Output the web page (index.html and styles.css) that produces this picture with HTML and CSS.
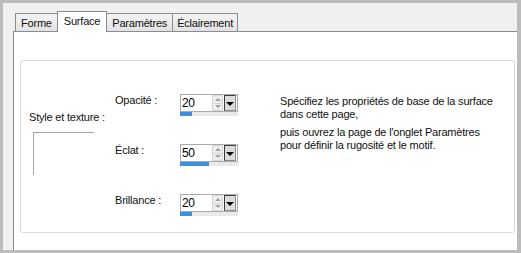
FILE: index.html
```html
<!DOCTYPE html>
<html lang="fr">
<head>
  <meta charset="UTF-8">
  <title>Surface</title>
  <link rel="stylesheet" href="styles.css">
</head>
<body>

<div class="window">
  <div class="tabs">
    <div class="tab">Forme</div>
    <div class="tab active">Surface</div>
    <div class="tab">Paramètres</div>
    <div class="tab">Éclairement</div>
  </div>

  <div class="panel">
    <div class="group">
      <div class="col-style">
        <div class="label">Style et texture :</div>
        <div class="preview"></div>
      </div>

      <div class="col-values">
        <div class="row">
          <div class="row-label">Opacité :</div>
          <div class="spin">
            <div class="spin-field">
              <span class="spin-value">20</span>
              <span class="spin-arrows"><i class="up"></i><i class="down"></i></span>
              <span class="spin-drop"></span>
            </div>
            <div class="spin-bar"><div class="spin-fill" style="width: 20%"></div></div>
          </div>
        </div>
        <div class="row">
          <div class="row-label">Éclat :</div>
          <div class="spin">
            <div class="spin-field">
              <span class="spin-value">50</span>
              <span class="spin-arrows"><i class="up"></i><i class="down"></i></span>
              <span class="spin-drop"></span>
            </div>
            <div class="spin-bar"><div class="spin-fill" style="width: 50%"></div></div>
          </div>
        </div>
        <div class="row">
          <div class="row-label">Brillance :</div>
          <div class="spin">
            <div class="spin-field">
              <span class="spin-value">20</span>
              <span class="spin-arrows"><i class="up"></i><i class="down"></i></span>
              <span class="spin-drop"></span>
            </div>
            <div class="spin-bar"><div class="spin-fill" style="width: 20%"></div></div>
          </div>
        </div>
      </div>

      <div class="col-help">
        <p>Spécifiez les propriétés de base de la surface<br>dans cette page,</p>
        <p>puis ouvrez la page de l'onglet Paramètres<br>pour définir la rugosité et le motif.</p>
      </div>
    </div>
  </div>
</div>

</body>
</html>
```

FILE: styles.css
```css
html, body {
  margin: 0;
  padding: 0;
}
body {
  width: 521px;
  height: 253px;
  background: #f0f0f0;
  font-family: "Liberation Sans", Arial, sans-serif;
  font-size: 11px;
  line-height: 13px;
  letter-spacing: -0.2px;
  color: #111;
  overflow: hidden;
}
.window {
  box-sizing: border-box;
  height: 253px;
  border: 3px solid #bcbcbc;
  border-right-width: 4px;
  padding: 8px 0 0 10px;
  display: flex;
  flex-direction: column;
}

/* tabs */
.tabs {
  display: flex;
  align-items: flex-end;
  padding-left: 2px;
  height: 20px;
}
.tab {
  box-sizing: border-box;
  height: 18px;
  padding: 3px 5px 0;
  margin-left: -1px;
  border: 1px solid #898c95;
  border-bottom: none;
  background: linear-gradient(#f4f4f4, #e2e2e2);
}
.tab:first-child {
  margin-left: 0;
}
.tab:last-child {
  padding: 3px 4px 0;
}
.tab.active {
  position: relative;
  height: 21px;
  margin-bottom: -1px;
  padding: 3px 6px 0;
  background: #fff;
  z-index: 1;
}

.panel {
  flex: 1;
  background: #fff;
  border-top: 1px solid #898c95;
  border-left: 1px solid #898c95;
  padding: 28px 2px 0 6px;
}

/* group box */
.group {
  box-sizing: border-box;
  height: 173px;
  border: 1px solid #d9d9d9;
  border-radius: 3px;
  display: flex;
  align-items: flex-start;
}
.col-style {
  width: 86px;
  padding: 50px 0 0 8px;
}
.preview {
  width: 60px;
  height: 42px;
  margin: 8px 0 0 4px;
  border-top: 1px solid #a4a4a4;
  border-left: 1px solid #a4a4a4;
}

.col-values {
  padding-top: 33px;
  display: flex;
  flex-direction: column;
  gap: 28px;
}
.row {
  display: flex;
  align-items: flex-start;
}
.row-label {
  width: 65px;
}

/* spin control */
.spin {
  width: 58px;
}
.spin-field {
  box-sizing: border-box;
  height: 18px;
  display: flex;
  border: 1px solid #a9abb0;
  padding: 0 1px 0 0;
  background: #fff;
}
.spin-value {
  flex: 1;
  padding: 2px 0 0 1px;
  font-size: 12px;
  letter-spacing: -0.3px;
  color: #000;
}
.spin-arrows {
  width: 11px;
  margin-right: 1px;
  display: flex;
  flex-direction: column;
}
.spin-arrows i {
  flex: 1;
  position: relative;
  background: #efefef;
  border: 1px solid #d6d6d6;
}
.spin-arrows i + i {
  border-top: none;
}
.spin-arrows i::after {
  content: "";
  position: absolute;
  left: 2px;
  top: 2px;
  border-left: 3px solid transparent;
  border-right: 3px solid transparent;
}
.spin-arrows .up::after {
  border-bottom: 3px solid #96a3b4;
}
.spin-arrows .down::after {
  top: 1px;
  border-top: 3px solid #96a3b4;
}
.spin-drop {
  box-sizing: border-box;
  width: 12px;
  position: relative;
  background: #dcdcdc;
  border: 1px solid #3c3c3c;
  border-right-color: #8c8c8c;
  border-bottom-color: #8c8c8c;
}
.spin-drop::after {
  content: "";
  position: absolute;
  left: 1px;
  top: 6px;
  border-left: 4px solid transparent;
  border-right: 4px solid transparent;
  border-top: 4px solid #000;
}
.spin-bar {
  height: 4px;
  background: #e9e9e9;
}
.spin-fill {
  height: 100%;
  background: #3d8fe1;
}

.col-help {
  margin: 34px 0 0 42px;
}
.col-help p {
  margin: 0 0 5px;
}
```
